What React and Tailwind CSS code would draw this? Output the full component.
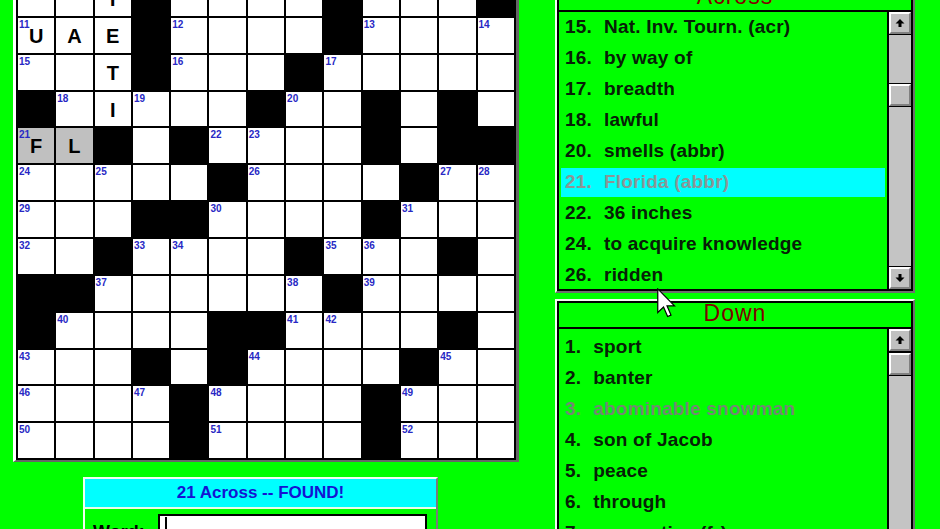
import React from "react";

const ROWS = [
  "..Y#....#...#",
  "UAE#....#....",
  "..T#...#.....",
  "#.I...#..#.#.",
  "FL#.#....#.##",
  ".....#....#..",
  "...##....#...",
  "..#....#...#.",
  "##......#....",
  "#....##....#.",
  "...#.#....#..",
  "....#....#...",
  "....#....#...",
];

const HL = { "4-0": true, "4-1": true };

function buildCells() {
  const cells = [];
  let n = 0;
  const isBlack = (r, c) =>
    r < 0 || c < 0 || r > 12 || c > 12 || ROWS[r][c] === "#";
  for (let r = 0; r < 13; r++) {
    for (let c = 0; c < 13; c++) {
      const ch = ROWS[r][c];
      if (ch === "#") {
        cells.push({ key: `${r}-${c}`, black: true });
        continue;
      }
      const across = isBlack(r, c - 1) && !isBlack(r, c + 1);
      const down = isBlack(r - 1, c) && !isBlack(r + 1, c);
      let num = null;
      if (across || down) {
        n += 1;
        num = n;
      }
      cells.push({
        key: `${r}-${c}`,
        black: false,
        num,
        letter: ch === "." ? "" : ch,
        hl: !!HL[`${r}-${c}`],
      });
    }
  }
  return cells;
}

const ACROSS = [
  ["15", "Nat. Inv. Tourn. (acr)"],
  ["16", "by way of"],
  ["17", "breadth"],
  ["18", "lawful"],
  ["20", "smells (abbr)"],
  ["21", "Florida (abbr)", "hl"],
  ["22", "36 inches"],
  ["24", "to acquire knowledge"],
  ["26", "ridden"],
];

const DOWN = [
  ["1", "sport"],
  ["2", "banter"],
  ["3", "abominable snowman", "dim"],
  ["4", "son of Jacob"],
  ["5", "peace"],
  ["6", "through"],
  ["7", "connective (fr)"],
];

function Arrow({ down }) {
  return (
    <svg width="10" height="10" viewBox="0 0 10 10" className={down ? "rotate-180" : ""}>
      <polygon points="5,1 9.5,5.5 6.5,5.5 6.5,9 3.5,9 3.5,5.5 0.5,5.5" fill="#000" />
    </svg>
  );
}

function Btn({ down }) {
  return (
    <div className={down ? "border-t border-black" : "border-b border-black"}>
      <div className="h-[22px] bg-[#c0c0c0] border-t-2 border-l-2 border-t-white border-l-white border-r-2 border-b-2 border-r-[#808080] border-b-[#808080] flex items-center justify-center">
        <Arrow down={down} />
      </div>
    </div>
  );
}

function Scrollbar({ thumbClass, showDown }) {
  return (
    <div className="w-[24px] shrink-0 border-l-2 border-black bg-[#c4c4c4] flex flex-col">
      <Btn />
      <div className="flex-1 flex flex-col">
        <div className={thumbClass}>
          <div className="border-y border-black">
            <div className="h-[22px] bg-[#c0c0c0] border-t-2 border-l-2 border-t-white border-l-white border-r-2 border-b-2 border-r-[#808080] border-b-[#808080]" />
          </div>
        </div>
      </div>
      {showDown && <Btn down />}
    </div>
  );
}

function Row({ n, t, mode }) {
  const cls =
    mode === "hl"
      ? "h-[29px] flex items-center pl-[4px] bg-[#00ffff] text-[#8a9696]"
      : mode === "dim"
      ? "h-[29px] flex items-center pl-[4px] text-[#738873]"
      : "h-[29px] flex items-center pl-[4px] text-[#072007]";
  return (
    <div className="h-[31px] py-[1px]">
      <div className={cls}>
        <span>{n}.</span>
        <span className="ml-[12px]">{t}</span>
      </div>
    </div>
  );
}

function Panel({ title, items, listClass, itemsClass, thumbClass, showDown }) {
  return (
    <div className="border-2 border-t-[#f2fff2] border-l-[#f2fff2] border-r-[#6e6e6e] border-b-[#6e6e6e]">
      <div className="border-2 border-black bg-[#00ff00]">
        <div className="h-[26px] pb-[4px] flex items-center justify-center text-[23px] tracking-[1px] leading-none text-[#800000] border-b-2 border-black">
          {title}
        </div>
        <div className={listClass}>
          <div className={itemsClass}>
            {items.map(([n, t, m]) => (
              <Row key={n} n={n} t={t} mode={m} />
            ))}
          </div>
          <Scrollbar thumbClass={thumbClass} showDown={showDown} />
        </div>
      </div>
    </div>
  );
}

export default function App() {
  const cells = buildCells();
  return (
    <div className="relative w-[940px] h-[529px] overflow-hidden bg-[#00ff00] flex items-start font-['Liberation_Sans',Arial,sans-serif]">
      {/* left column */}
      <div className="w-[555px] shrink-0 pl-[13px] flex flex-col">
        <div className="-mt-[21px] w-fit border-l-[3px] border-l-white border-r-[3px] border-r-[#666666] border-b-[2px] border-b-[#666666]">
          <div className="grid grid-cols-[repeat(13,36.3px)] grid-rows-[repeat(13,34.86px)] gap-[2px] bg-black p-[2px]">
            {cells.map((c) =>
              c.black ? (
                <div key={c.key} className="bg-black" />
              ) : (
                <div
                  key={c.key}
                  className={
                    c.hl
                      ? "relative bg-[#c0c0c0] flex items-center justify-center"
                      : "relative bg-white flex items-center justify-center"
                  }
                >
                  {c.num && (
                    <span className="absolute left-[1px] top-[2px] text-[10px] leading-none font-bold text-[#2828c4]">
                      {c.num}
                    </span>
                  )}
                  {c.letter && (
                    <span className="text-[20px] leading-none font-bold text-black pt-[1px]">
                      {c.letter}
                    </span>
                  )}
                </div>
              )
            )}
          </div>
        </div>

        <div className="mt-[15px] ml-[70px] w-[355px] border-2 border-t-[#f0fff0] border-l-[#f0fff0] border-r-[#7a7a7a] border-b-[#7a7a7a]">
          <div className="h-[30px] bg-[#00ffff] flex items-center justify-center text-[17px] font-bold text-[#1414d2] border-b-2 border-b-[#e6ffe6]">
            21 Across -- FOUND!
          </div>
          <div className="flex items-start pl-[8px] pt-[5px]">
            <span className="inline-block w-[65px] mt-[5px] text-[18px] font-bold text-black">
              Word:
            </span>
            <div className="w-[269px] h-[30px] bg-white border-2 border-black pl-[5px] pt-[1px]">
              <div className="w-[2px] h-[20px] bg-black" />
            </div>
          </div>
        </div>
      </div>

      {/* right column */}
      <div className="w-[360px] shrink-0 flex flex-col -mt-[18px]">
        <Panel
          title="Across"
          items={ACROSS}
          listClass="flex h-[277px]"
          itemsClass="flex-1 px-[2px] overflow-hidden text-[19px] font-bold tracking-[0.2px] whitespace-nowrap"
          thumbClass="mt-[48px]"
          showDown
        />
        <div className="mt-[6px]">
          <Panel
            title="Down"
            items={DOWN}
            listClass="flex h-[300px]"
            itemsClass="flex-1 px-[2px] pt-[3px] overflow-hidden text-[19px] font-bold tracking-[0.2px] whitespace-nowrap"
            thumbClass="mt-0"
            showDown={false}
          />
        </div>
      </div>

      {/* mouse cursor */}
      <svg
        className="absolute left-[657px] top-[288px]"
        width="19"
        height="30"
        viewBox="0 0 12.5 19.5"
      >
        <path
          d="M0.5,0.5 L0.5,16 L4.3,12.4 L7,18.6 L9.2,17.7 L6.6,11.6 L11.5,11.6 Z"
          fill="#ffffff"
          stroke="#000000"
          strokeWidth="0.8"
          strokeLinejoin="miter"
        />
      </svg>
    </div>
  );
}
